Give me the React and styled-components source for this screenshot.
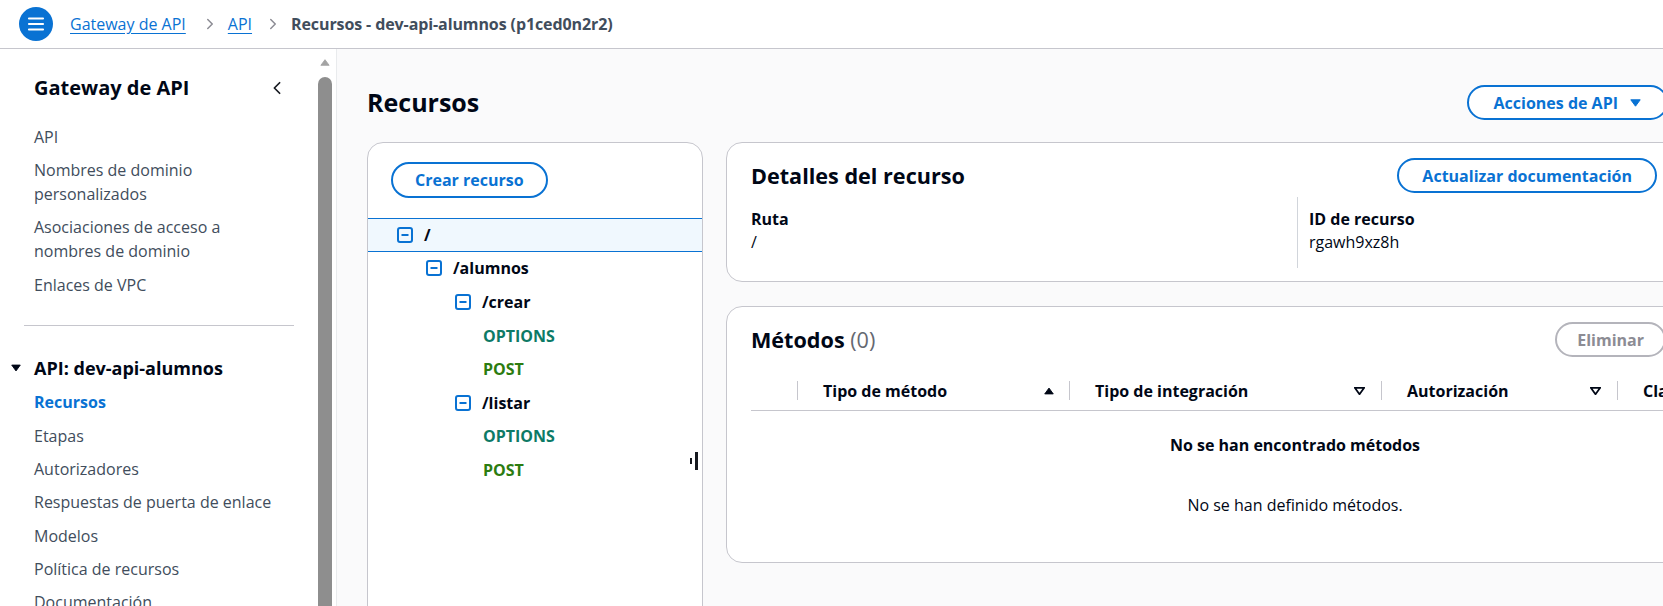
import React from 'react'
import styled, { createGlobalStyle } from 'styled-components'

const GlobalStyle = createGlobalStyle`
  html, body {
    margin: 0;
    padding: 0;
  }
  body {
    font-family: "Open Sans", "Noto Sans", sans-serif;
    color: #000716;
    background: #fff;
    overflow: hidden;
  }
  * {
    box-sizing: border-box;
  }
`

const Page = styled.div`
  width: 1663px;
  height: 606px;
  display: flex;
  flex-direction: column;
  overflow: hidden;
`

const TopBar = styled.header`
  flex: none;
  height: 49px;
  display: flex;
  align-items: center;
  padding-left: 19px;
  background: #fff;
  border-bottom: 1px solid #c6c6cd;
`

const MenuButton = styled.div`
  width: 34px;
  height: 34px;
  border-radius: 50%;
  background: #0972d3;
  display: flex;
  align-items: center;
  justify-content: center;
`

const Crumbs = styled.nav`
  display: flex;
  align-items: center;
  margin-left: 17px;
  font-size: 16px;
  line-height: 22px;
`

const CrumbLink = styled.a`
  color: #0972d3;
  text-decoration: underline;
  text-underline-offset: 3px;
`

const CrumbSep = styled.span`
  display: flex;
  padding: 0 12px 0 ${p => p.$pl || 16}px;
`

const CrumbCurrent = styled.span`
  color: #414d5c;
  font-weight: 700;
  letter-spacing: -0.1px;
`

const Body = styled.div`
  flex: 1;
  min-height: 0;
  display: flex;
`

const SideNav = styled.aside`
  flex: none;
  width: 337px;
  display: flex;
  background: #fff;
  border-right: 1px solid #e9ebed;
`

const NavInner = styled.div`
  width: 318px;
  padding: 25px 0 0 34px;
`

const NavHeader = styled.div`
  width: 250px;
  display: flex;
  align-items: center;
  justify-content: space-between;
  font-size: 20px;
  font-weight: 700;
  line-height: 28px;
`

const NavList = styled.div`
  width: 246px;
  margin-top: ${p => p.$top || 0}px;
`

const NavItem = styled.div`
  font-size: 16px;
  line-height: 24px;
  padding: 4.7px 0;
  color: ${p => (p.$active ? '#0972d3' : '#414d5c')};
  font-weight: ${p => (p.$active ? 700 : 400)};
  white-space: ${p => (p.$nowrap ? 'nowrap' : 'normal')};
`

const NavDivider = styled.hr`
  width: 270px;
  margin: 23px 0 0 -10px;
  border: 0;
  border-top: 1px solid #c6c6cd;
`

const SectionTitle = styled.div`
  display: flex;
  align-items: center;
  gap: 13px;
  margin: 28px 0 0 -23px;
  font-size: 18px;
  font-weight: 700;
  line-height: 28px;
`

const ScrollTrack = styled.div`
  width: 18px;
  display: flex;
  flex-direction: column;
  align-items: flex-start;
  padding-top: 10px;
`

const ScrollArrow = styled.div`
  width: 14px;
  display: flex;
  justify-content: center;
`

const ScrollThumb = styled.div`
  width: 14px;
  flex: 1;
  margin-top: 11px;
  border-radius: 7px 7px 0 0;
  background: #8e8e8e;
`

const Main = styled.main`
  flex: 1;
  min-width: 0;
  overflow: hidden;
  background: #fafafb;
  padding-left: 30px;
`

const PageHeader = styled.div`
  width: 1301px;
  height: 35px;
  margin-top: 36px;
  display: flex;
  align-items: center;
  justify-content: space-between;
`

const H1 = styled.h1`
  margin: 0;
  font-size: 25px;
  font-weight: 700;
  line-height: 35px;
`

const Button = styled.button`
  height: ${p => p.$h || 35}px;
  padding: 0 ${p => p.$px || 22}px;
  margin-right: ${p => p.$mr || 0}px;
  display: inline-flex;
  align-items: center;
  gap: 12px;
  border-radius: 20px;
  background: #fff;
  border: 2px solid ${p => (p.$disabled ? '#b4b4bb' : '#0972d3')};
  color: ${p => (p.$disabled ? '#8c8c94' : '#0972d3')};
  font-family: inherit;
  font-size: 16px;
  font-weight: 700;
  white-space: nowrap;
`

const Split = styled.div`
  display: flex;
  align-items: flex-start;
  gap: 23px;
  margin-top: 22px;
`

const TreePanel = styled.section`
  position: relative;
  flex: none;
  width: 336px;
  height: 520px;
  padding-top: 19px;
  background: #fff;
  border: 1px solid #c6c6cd;
  border-radius: 16px;
`

const CreateWrap = styled.div`
  padding-left: 23px;
`

const TreeList = styled.div`
  margin-top: 20px;
`

const TreeRow = styled.div`
  height: 33.6px;
  display: flex;
  align-items: center;
  gap: 11px;
  padding-left: ${p => p.$indent}px;
  background: ${p => (p.$selected ? '#f0f8fe' : 'transparent')};
  border-top: 1px solid ${p => (p.$selected ? '#0972d3' : 'transparent')};
  border-bottom: 1px solid ${p => (p.$selected ? '#0972d3' : 'transparent')};
  font-size: 16px;
  font-weight: 700;
  color: ${p => p.$color || '#000716'};
`

const ResizeHandle = styled.div`
  position: absolute;
  right: 4px;
  top: 309px;
  display: flex;
  align-items: center;
  gap: 3px;
  span:first-child {
    width: 2px;
    height: 6px;
    background: #16191f;
  }
  span:last-child {
    width: 3px;
    height: 18px;
    background: #16191f;
  }
`

const RightCol = styled.div`
  flex: none;
  width: 956px;
  display: flex;
  flex-direction: column;
  gap: 24px;
`

const Card = styled.section`
  background: #fff;
  border: 1px solid #c6c6cd;
  border-radius: 16px;
  padding: 15px 24px ${p => p.$pb || 13}px;
  overflow: hidden;
`

const CardHeader = styled.div`
  display: flex;
  align-items: center;
  justify-content: space-between;
  height: 35px;
`

const H2 = styled.h2`
  margin: 0;
  font-size: 21.6px;
  font-weight: 700;
  line-height: 35px;
  span {
    font-weight: 400;
    color: #656871;
  }
`

const ColumnGrid = styled.div`
  width: 1092px;
  margin-top: 4px;
  display: grid;
  grid-template-columns: 546px 1fr;
`

const Column = styled.div`
  padding: 11px 0 14px ${p => (p.$divider ? 11 : 0)}px;
  border-left: ${p => (p.$divider ? '1px solid #d1d5db' : 'none')};
`

const Label = styled.div`
  font-size: 16px;
  font-weight: 700;
  line-height: 23px;
`

const Value = styled.div`
  font-size: 16px;
  line-height: 23px;
`

const Table = styled.div`
  width: 1088px;
  margin-top: 14px;
`

const HeadRow = styled.div`
  height: 40px;
  display: grid;
  grid-template-columns: 46px 272px 312px 236px 222px;
  border-bottom: 1px solid #c6c6cd;
`

const HeadCell = styled.div`
  position: relative;
  display: flex;
  align-items: center;
  justify-content: space-between;
  padding: 0 ${p => p.$pr || 0}px 0 26px;
  font-size: 16px;
  font-weight: 700;
  white-space: nowrap;
  &::before {
    content: '';
    display: ${p => (p.$sep ? 'block' : 'none')};
    position: absolute;
    left: 0;
    top: 10px;
    bottom: 10px;
    width: 1px;
    background: #c6c6cd;
  }
`

const Empty = styled.div`
  padding-top: 23px;
  text-align: center;
  font-size: 16px;
  line-height: 23px;
`

const EmptyTitle = styled.div`
  font-weight: 700;
`

const EmptyText = styled.div`
  margin-top: 37px;
`

const Chevron = ({ dir = 'right', color = '#8c8c94', size = 12 }) => (
  <svg width={size} height={size} viewBox="0 0 16 16" fill="none">
    <path
      d={dir === 'right' ? 'M5 2l6 6-6 6' : 'M11 2L5 8l6 6'}
      stroke={color}
      strokeWidth="2"
      strokeLinecap="round"
      strokeLinejoin="round"
    />
  </svg>
)

const Triangle = ({ up, outline, color = '#000716', w = 11, h = 8 }) => (
  <svg width={w} height={h} viewBox="0 0 11 8">
    <polygon
      points={up ? '5.5,0.8 10.2,7.2 0.8,7.2' : '0.8,0.8 10.2,0.8 5.5,7.2'}
      fill={outline ? '#fff' : color}
      stroke={color}
      strokeWidth={outline ? 1.8 : 1}
      strokeLinejoin="round"
    />
  </svg>
)

const MinusBox = () => (
  <svg width="16" height="16" viewBox="0 0 16 16" fill="none">
    <rect x="1" y="1" width="14" height="14" rx="2" stroke="#0972d3" strokeWidth="2" />
    <path d="M4.5 8h7" stroke="#0972d3" strokeWidth="2" />
  </svg>
)

const Hamburger = () => (
  <svg width="18" height="16" viewBox="0 0 18 16" fill="none">
    <path d="M2 2.5h14M2 8h14M2 13.5h14" stroke="#fff" strokeWidth="2.2" strokeLinecap="round" />
  </svg>
)

const tree = [
  { label: '/', indent: 29, icon: true, selected: true },
  { label: '/alumnos', indent: 58, icon: true },
  { label: '/crear', indent: 87, icon: true },
  { label: 'OPTIONS', indent: 115, color: '#0d7a66' },
  { label: 'POST', indent: 115, color: '#2c7c10' },
  { label: '/listar', indent: 87, icon: true },
  { label: 'OPTIONS', indent: 115, color: '#0d7a66' },
  { label: 'POST', indent: 115, color: '#2c7c10' },
]

const apiItems = [
  'Recursos',
  'Etapas',
  'Autorizadores',
  'Respuestas de puerta de enlace',
  'Modelos',
  'Política de recursos',
  'Documentación',
]

export default function App() {
  return (
    <Page>
      <GlobalStyle />
      <TopBar>
        <MenuButton>
          <Hamburger />
        </MenuButton>
        <Crumbs>
          <CrumbLink>Gateway de API</CrumbLink>
          <CrumbSep $pl={18}>
            <Chevron />
          </CrumbSep>
          <CrumbLink>API</CrumbLink>
          <CrumbSep $pl={15}>
            <Chevron />
          </CrumbSep>
          <CrumbCurrent>Recursos - dev-api-alumnos (p1ced0n2r2)</CrumbCurrent>
        </Crumbs>
      </TopBar>
      <Body>
        <SideNav>
          <NavInner>
            <NavHeader>
              Gateway de API
              <Chevron dir="left" color="#16191f" size={14} />
            </NavHeader>
            <NavList $top={18}>
              <NavItem>API</NavItem>
              <NavItem>Nombres de dominio personalizados</NavItem>
              <NavItem>Asociaciones de acceso a nombres de dominio</NavItem>
              <NavItem>Enlaces de VPC</NavItem>
            </NavList>
            <NavDivider />
            <SectionTitle>
              <Triangle w={10} h={8} />
              API: dev-api-alumnos
            </SectionTitle>
            <NavList $top={4}>
              {apiItems.map((item, i) => (
                <NavItem key={item} $active={i === 0} $nowrap>
                  {item}
                </NavItem>
              ))}
            </NavList>
          </NavInner>
          <ScrollTrack>
            <ScrollArrow>
              <Triangle up color="#a3a3a3" w={10} h={7} />
            </ScrollArrow>
            <ScrollThumb />
          </ScrollTrack>
        </SideNav>
        <Main>
          <PageHeader>
            <H1>Recursos</H1>
            <Button $px={25}>
              Acciones de API
              <Triangle color="#0972d3" />
            </Button>
          </PageHeader>
          <Split>
            <TreePanel>
              <CreateWrap>
                <Button $h={36} $px={22}>Crear recurso</Button>
              </CreateWrap>
              <TreeList>
                {tree.map((n, i) => (
                  <TreeRow key={i} $indent={n.indent} $selected={n.selected} $color={n.color}>
                    {n.icon && <MinusBox />}
                    {n.label}
                  </TreeRow>
                ))}
              </TreeList>
              <ResizeHandle>
                <span />
                <span />
              </ResizeHandle>
            </TreePanel>
            <RightCol>
              <Card>
                <CardHeader>
                  <H2>Detalles del recurso</H2>
                  <Button $px={23}>Actualizar documentación</Button>
                </CardHeader>
                <ColumnGrid>
                  <Column>
                    <Label>Ruta</Label>
                    <Value>/</Value>
                  </Column>
                  <Column $divider>
                    <Label>ID de recurso</Label>
                    <Value>rgawh9xz8h</Value>
                  </Column>
                </ColumnGrid>
              </Card>
              <Card $pb={45}>
                <CardHeader>
                  <H2>
                    Métodos <span>(0)</span>
                  </H2>
                  <Button $disabled $px={20} $mr={-9}>Eliminar</Button>
                </CardHeader>
                <Table>
                  <HeadRow>
                    <HeadCell />
                    <HeadCell $sep $pr={15}>
                      Tipo de método
                      <Triangle up w={10} h={8} />
                    </HeadCell>
                    <HeadCell $sep $pr={16}>
                      Tipo de integración
                      <Triangle outline w={11} h={8} />
                    </HeadCell>
                    <HeadCell $sep $pr={16}>
                      Autorización
                      <Triangle outline w={11} h={8} />
                    </HeadCell>
                    <HeadCell $sep $pr={15}>
                      Clave de API
                    </HeadCell>
                  </HeadRow>
                  <Empty>
                    <EmptyTitle>No se han encontrado métodos</EmptyTitle>
                    <EmptyText>No se han definido métodos.</EmptyText>
                  </Empty>
                </Table>
              </Card>
            </RightCol>
          </Split>
        </Main>
      </Body>
    </Page>
  )
}
